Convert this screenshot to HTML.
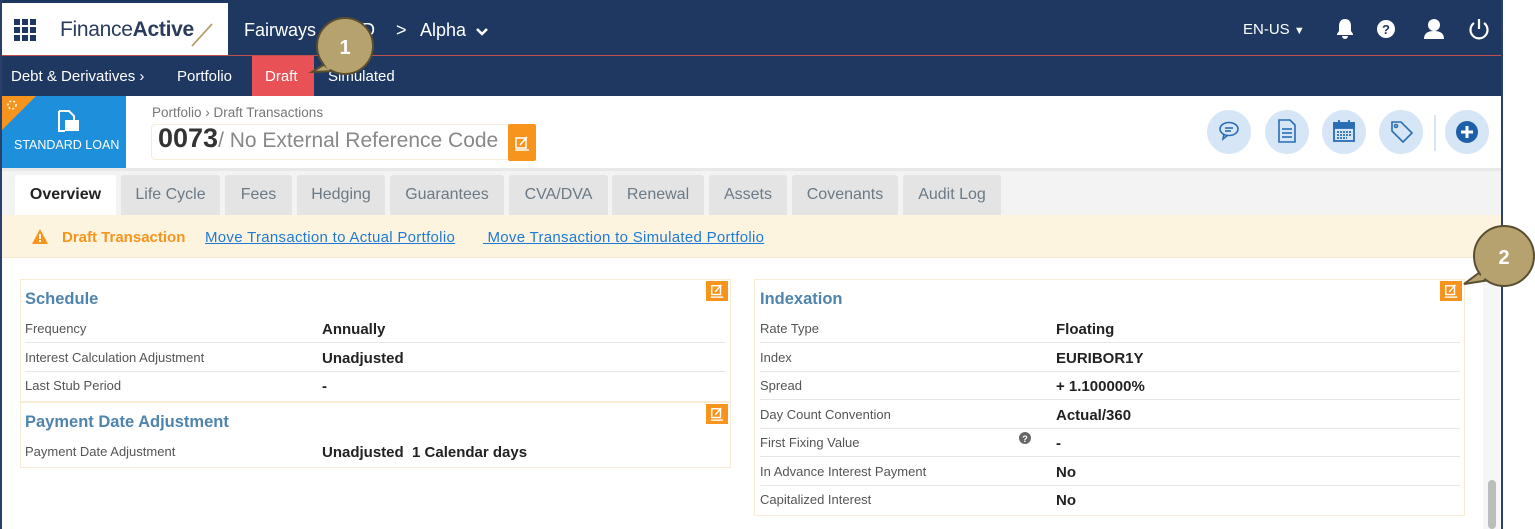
<!DOCTYPE html>
<html><head><meta charset="utf-8"><style>
*{box-sizing:border-box;margin:0;padding:0}
body{width:1535px;height:529px;overflow:hidden;background:#fff;font-family:"Liberation Sans",sans-serif;position:relative}
.a{position:absolute}
.nav{left:0;top:0;width:1502px;height:96px;background:#1f3861}
.logo{left:2px;top:3px;width:226px;height:52px;background:#fff}
.red{left:0;top:55px;width:1502px;height:1px;background:#c0504d}
.t{color:#fff;white-space:nowrap}
.lbl{font-size:13px;color:#555;white-space:nowrap}
.val{font-size:15px;font-weight:bold;color:#222;white-space:nowrap}
.sep{height:1px;background:#e6e6e6}
.ttl{font-size:16.5px;font-weight:bold;color:#4f84ad;white-space:nowrap}
.box{border:1px solid #f8ecd6;background:#fff}
.ed{width:22px;height:20px;background:#f7941d}
.ed svg{position:absolute;left:4px;top:3px}
.tab{top:175px;height:40px;background:#e4e4e4;border-radius:3px 3px 0 0;font-size:16px;color:#6b7a86;text-align:center;line-height:40px}
.cb{border-radius:50%;background:#d6e6f7;width:44px;height:44px;top:110px}
</style></head><body>
<div class="a nav"></div>
<div class="a logo"></div>
<div class="a red"></div>
<div class="a" style="left:0;top:0;width:2px;height:529px;background:#2b3f6b"></div>
<div class="a" style="left:1501px;top:0;width:2px;height:529px;background:#2b3f6b"></div>
<svg class="a" style="left:14px;top:19px" width="22" height="22" viewBox="0 0 22 22" fill="#1f3861"><rect x="0" y="0" width="6" height="6"/><rect x="8" y="0" width="6" height="6"/><rect x="16" y="0" width="6" height="6"/><rect x="0" y="8" width="6" height="6"/><rect x="8" y="8" width="6" height="6"/><rect x="16" y="8" width="6" height="6"/><rect x="0" y="16" width="6" height="6"/><rect x="8" y="16" width="6" height="6"/><rect x="16" y="16" width="6" height="6"/></svg>
<div class="a" style="left:60px;top:18px;font-size:21px;color:#2a3b5e;white-space:nowrap;letter-spacing:-0.3px">Finance<span style="font-weight:bold">Active</span></div>
<svg class="a" style="left:190px;top:20px" width="24" height="28"><line x1="2" y1="26" x2="22" y2="4" stroke="#b5a26e" stroke-width="1.8"/></svg>
<div class="a t" style="left:244px;top:20px;font-size:18px">Fairways &nbsp;&nbsp;&nbsp;&nbsp;&nbsp;&nbsp;TD</div>
<div class="a t" style="left:396px;top:20px;font-size:18px">&gt;</div>
<div class="a t" style="left:420px;top:20px;font-size:18px">Alpha</div>
<svg class="a" style="left:475px;top:27px" width="14" height="10"><path d="M2 2l5 5 5-5" fill="none" stroke="#fff" stroke-width="2.5"/></svg>
<div class="a t" style="left:1243px;top:21px;font-size:15px">EN-US <span style="font-size:11px">&#9660;</span></div>
<svg class="a" style="left:1335px;top:18px" width="20" height="22" viewBox="0 0 20 22" fill="#fff"><path d="M10 1c-4 0-6 3-6 7v5l-2 3v1h16v-1l-2-3V8c0-4-2-7-6-7zM7 18h6a3 3 0 01-6 0z"/></svg>
<svg class="a" style="left:1377px;top:20px" width="18" height="18" viewBox="0 0 18 18"><circle cx="9" cy="9" r="9" fill="#fff"/><text x="9" y="14" font-size="13" font-weight="bold" fill="#1f3861" text-anchor="middle" font-family="Liberation Sans">?</text></svg>
<svg class="a" style="left:1423px;top:18px" width="22" height="22" viewBox="0 0 22 22" fill="#fff"><circle cx="11" cy="7" r="6"/><path d="M1 21c0-6 4-8 10-8s10 2 10 8z"/></svg>
<svg class="a" style="left:1468px;top:18px" width="22" height="22" viewBox="0 0 22 22" fill="none" stroke="#fff" stroke-width="2.2"><path d="M6 5a8.5 8.5 0 1010 0"/><line x1="11" y1="1" x2="11" y2="11"/></svg>
<div class="a t" style="left:11px;top:68px;font-size:15px">Debt &amp; Derivatives ›</div>
<div class="a t" style="left:177px;top:68px;font-size:15px">Portfolio</div>
<div class="a" style="left:252px;top:56px;width:62px;height:40px;background:#e85156"></div>
<div class="a t" style="left:265px;top:68px;font-size:15px">Draft</div>
<div class="a t" style="left:328px;top:68px;font-size:15px">Simulated</div>
<div class="a" style="left:2px;top:96px;width:124px;height:72px;background:#1e8fdb"></div>
<svg class="a" style="left:2px;top:96px" width="34" height="34"><polygon points="0,0 34,0 0,34" fill="#f7941d"/><circle cx="10" cy="9" r="4" fill="none" stroke="#fff" stroke-width="1.5" stroke-dasharray="2 2"/></svg>
<svg class="a" style="left:56px;top:109px" width="24" height="24" viewBox="0 0 24 24" fill="none" stroke="#fff" stroke-width="2"><path d="M3 2h10l5 5v4"/><path d="M3 2v20h6"/><rect x="10" y="12" width="12" height="9" fill="#fff"/></svg>
<div class="a t" style="left:14px;top:138px;font-size:12.5px">STANDARD LOAN</div>
<div class="a" style="left:152px;top:105px;font-size:13.5px;color:#777">Portfolio › Draft Transactions</div>
<div class="a" style="left:151px;top:124px;width:360px;height:36px;border:1px solid #f7ecd9;border-radius:4px"></div>
<div class="a" style="left:158px;top:123px;font-size:27px;font-weight:bold;color:#333;white-space:nowrap">0073<span style="font-weight:normal;color:#888;font-size:21px">/ No External Reference Code</span></div>
<div class="a" style="left:508px;top:124px;width:28px;height:37px;background:#f7941d;border-radius:2px"></div>
<svg class="a" style="left:514px;top:135px" width="16" height="16" viewBox="0 0 16 16" fill="none" stroke="#fff" stroke-width="1.5"><rect x="2" y="3" width="10" height="10"/><path d="M6 10l7-8"/><line x1="1" y1="15" x2="15" y2="15"/></svg>
<div class="a cb" style="left:1207px"></div>
<svg class="a" style="left:1218px;top:120px" width="22" height="22" viewBox="0 0 22 22" fill="none" stroke="#2a6db5" stroke-width="1.6"><ellipse cx="11" cy="9" rx="9" ry="6.5"/><path d="M6 14l-1 5 5-4"/><line x1="7" y1="8" x2="15" y2="8"/><line x1="7" y1="11" x2="13" y2="11"/></svg>
<div class="a cb" style="left:1265px"></div>
<svg class="a" style="left:1278px;top:119px" width="18" height="24" viewBox="0 0 18 24" fill="none" stroke="#2a6db5" stroke-width="1.6"><path d="M1 1h11l5 5v17H1z"/><line x1="4" y1="10" x2="14" y2="10"/><line x1="4" y1="14" x2="14" y2="14"/><line x1="4" y1="18" x2="14" y2="18"/></svg>
<div class="a cb" style="left:1322px"></div>
<svg class="a" style="left:1333px;top:119px" width="22" height="24" viewBox="0 0 22 24" fill="none" stroke="#2a6db5" stroke-width="1.8"><rect x="1" y="4" width="20" height="18"/><rect x="1" y="4" width="20" height="5" fill="#2a6db5"/><line x1="6" y1="1" x2="6" y2="6"/><line x1="16" y1="1" x2="16" y2="6"/><path d="M4 13h14M4 16h14M4 19h10" stroke-dasharray="2 1"/></svg>
<div class="a cb" style="left:1379px"></div>
<svg class="a" style="left:1390px;top:120px" width="24" height="24" viewBox="0 0 24 24" fill="none" stroke="#2a6db5" stroke-width="1.6"><path d="M2 2h9l11 11-9 9L2 11z"/><circle cx="6" cy="6" r="1.5"/></svg>
<div class="a" style="left:1434px;top:115px;width:2px;height:36px;background:#d6e6f7"></div>
<div class="a cb" style="left:1445px"></div>
<svg class="a" style="left:1456px;top:121px" width="22" height="22" viewBox="0 0 22 22"><circle cx="11" cy="11" r="11" fill="#1f5fa8"/><path d="M11 5v12M5 11h12" stroke="#fff" stroke-width="3"/></svg>
<div class="a" style="left:2px;top:168px;width:1499px;height:47px;background:#f3f3f3"></div>
<div class="a" style="left:2px;top:168px;width:1499px;height:3px;background:#e8e8e8"></div>
<div class="a tab" style="left:15px;width:101px;background:#fff;color:#222;font-weight:bold">Overview</div>
<div class="a tab" style="left:121px;width:99px">Life Cycle</div>
<div class="a tab" style="left:225px;width:67px">Fees</div>
<div class="a tab" style="left:297px;width:88px">Hedging</div>
<div class="a tab" style="left:390px;width:114px">Guarantees</div>
<div class="a tab" style="left:509px;width:99px">CVA/DVA</div>
<div class="a tab" style="left:612px;width:92px">Renewal</div>
<div class="a tab" style="left:709px;width:78px">Assets</div>
<div class="a tab" style="left:792px;width:106px">Covenants</div>
<div class="a tab" style="left:903px;width:98px">Audit Log</div>
<div class="a" style="left:2px;top:215px;width:1499px;height:43px;background:#fdf4e0;border-bottom:1px solid #f8ead0"></div>
<svg class="a" style="left:32px;top:229px" width="16" height="15" viewBox="0 0 16 15"><path d="M8 0L16 15H0z" fill="#f7941d"/><rect x="7" y="5" width="2" height="5" fill="#fff"/><rect x="7" y="11" width="2" height="2" fill="#fff"/></svg>
<div class="a" style="left:62px;top:229px;font-size:15px;font-weight:bold;color:#f7941d;white-space:nowrap">Draft Transaction</div>
<div class="a" style="left:205px;top:229px;font-size:15px;color:#1f7ad6;text-decoration:underline;white-space:nowrap;letter-spacing:0.3px">Move Transaction to Actual Portfolio</div>
<div class="a" style="left:483px;top:229px;font-size:15px;color:#1f7ad6;text-decoration:underline;white-space:nowrap;letter-spacing:0.3px">&nbsp;Move Transaction to Simulated Portfolio</div>
<div class="a" style="left:1483px;top:258px;width:17px;height:271px;background:#f6f6f6"></div>
<div class="a" style="left:1488px;top:480px;width:8px;height:49px;background:#bdbdbd;border-radius:4px"></div>
<div class="a box" style="left:20px;top:279px;width:711px;height:123px"></div>
<div class="a ed" style="left:706px;top:281px"><svg width="14" height="14" viewBox="0 0 16 16" fill="none" stroke="#fff" stroke-width="1.6"><rect x="2" y="2" width="10" height="10"/><path d="M6 9l7-8"/><line x1="1" y1="15" x2="15" y2="15"/></svg></div>
<div class="a ttl" style="left:25px;top:290px">Schedule</div>
<div class="a lbl" style="left:25px;top:321px">Frequency</div><div class="a val" style="left:322px;top:321px">Annually</div>
<div class="a sep" style="left:25px;top:342px;width:701px"></div>
<div class="a lbl" style="left:25px;top:350px">Interest Calculation Adjustment</div><div class="a val" style="left:322px;top:350px">Unadjusted</div>
<div class="a sep" style="left:25px;top:371px;width:701px"></div>
<div class="a lbl" style="left:25px;top:378px">Last Stub Period</div><div class="a val" style="left:322px;top:378px">-</div>
<div class="a box" style="left:20px;top:402px;width:711px;height:66px"></div>
<div class="a ed" style="left:706px;top:404px"><svg width="14" height="14" viewBox="0 0 16 16" fill="none" stroke="#fff" stroke-width="1.6"><rect x="2" y="2" width="10" height="10"/><path d="M6 9l7-8"/><line x1="1" y1="15" x2="15" y2="15"/></svg></div>
<div class="a ttl" style="left:25px;top:413px">Payment Date Adjustment</div>
<div class="a lbl" style="left:25px;top:444px">Payment Date Adjustment</div><div class="a val" style="left:322px;top:444px">Unadjusted &nbsp;1 Calendar days</div>
<div class="a box" style="left:754px;top:279px;width:711px;height:237px"></div>
<div class="a ed" style="left:1440px;top:281px"><svg width="14" height="14" viewBox="0 0 16 16" fill="none" stroke="#fff" stroke-width="1.6"><rect x="2" y="2" width="10" height="10"/><path d="M6 9l7-8"/><line x1="1" y1="15" x2="15" y2="15"/></svg></div>
<div class="a ttl" style="left:760px;top:290px">Indexation</div>
<div class="a lbl" style="left:760px;top:321px">Rate Type</div><div class="a val" style="left:1056px;top:321px">Floating</div>
<div class="a sep" style="left:760px;top:342px;width:700px"></div>
<div class="a lbl" style="left:760px;top:350px">Index</div><div class="a val" style="left:1056px;top:350px">EURIBOR1Y</div>
<div class="a sep" style="left:760px;top:371px;width:700px"></div>
<div class="a lbl" style="left:760px;top:378px">Spread</div><div class="a val" style="left:1056px;top:378px">+ 1.100000%</div>
<div class="a sep" style="left:760px;top:399px;width:700px"></div>
<div class="a lbl" style="left:760px;top:407px">Day Count Convention</div><div class="a val" style="left:1056px;top:407px">Actual/360</div>
<div class="a sep" style="left:760px;top:428px;width:700px"></div>
<div class="a lbl" style="left:760px;top:435px">First Fixing Value</div><div class="a val" style="left:1056px;top:435px">-</div>
<svg class="a" style="left:1019px;top:432px" width="12" height="12" viewBox="0 0 12 12"><circle cx="6" cy="6" r="6" fill="#666"/><text x="6" y="10" font-size="9" font-weight="bold" fill="#fff" text-anchor="middle" font-family="Liberation Sans">?</text></svg>
<div class="a sep" style="left:760px;top:456px;width:700px"></div>
<div class="a lbl" style="left:760px;top:464px">In Advance Interest Payment</div><div class="a val" style="left:1056px;top:464px">No</div>
<div class="a sep" style="left:760px;top:485px;width:700px"></div>
<div class="a lbl" style="left:760px;top:492px">Capitalized Interest</div><div class="a val" style="left:1056px;top:492px">No</div>
<svg class="a" style="left:0;top:0" width="1535" height="529">
<g fill="#b5a26e" stroke="#5a4e30" stroke-width="2">
<path d="M325 64 L312 72 L335 71 Z"/>
<circle cx="345" cy="46" r="28"/>
<path d="M1480 272 L1464 284 L1490 280"/>
<circle cx="1504" cy="256" r="30"/>
</g>
<path d="M322 60 L328 70 L338 67 Z" fill="#b5a26e"/>
<path d="M1482 268 L1480 280 L1492 276 Z" fill="#b5a26e"/>
<text x="345" y="54" font-size="20" font-weight="bold" fill="#fff" text-anchor="middle" font-family="Liberation Sans">1</text>
<text x="1504" y="264" font-size="20" font-weight="bold" fill="#fff" text-anchor="middle" font-family="Liberation Sans">2</text>
</svg>
</body></html>
